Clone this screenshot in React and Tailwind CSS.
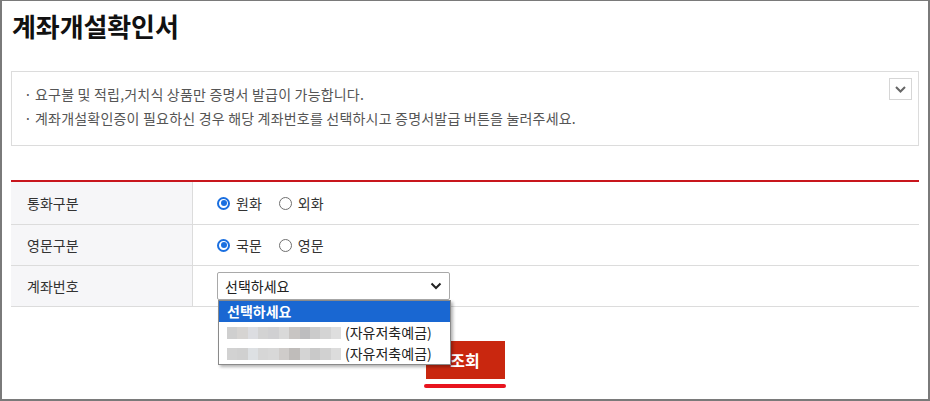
import React from "react";

const FONT = { fontFamily: '"Noto Sans CJK KR", "Noto Sans", sans-serif' };

function Radio({ checked, label }) {
  return (
    <span className="flex items-center">
      {checked ? (
        <span className="w-[13px] h-[13px] rounded-full border-2 border-[#1a6fe0] flex items-center justify-center">
          <span className="w-[6px] h-[6px] rounded-full bg-[#1a6fe0]" />
        </span>
      ) : (
        <span className="w-[13px] h-[13px] rounded-full border border-[#6f6f6f]" />
      )}
      <span className="ml-[6px] text-[14px] text-[#333]">{label}</span>
    </span>
  );
}

function Mosaic({ colors }) {
  return (
    <span className="flex h-[12px] w-[114px] overflow-hidden">
      {colors.map((c, i) => (
        <span key={i} className="h-full flex-1" style={{ background: c }} />
      ))}
    </span>
  );
}

const m1 = ["#cfcfcf", "#d6d4d2", "#dcdde1", "#d3d3d3", "#d0d0d2", "#d9d9d9", "#c8c5c3", "#bdbdbf", "#cbcbcb", "#d4d4d4", "#dedede"];
const m2 = ["#d2d2d2", "#d0d0d0", "#dde0e3", "#d6d6d6", "#d8d8d8", "#cfccca", "#bfbcba", "#d4d4d4", "#c9c9c9", "#d1d1d1", "#dcdcdc"];

export default function App() {
  return (
    <div
      className="w-[930px] h-[401px] bg-white border-l-2 border-t border-r-2 border-b-2 border-[#7a7a7a] overflow-hidden relative"
      style={FONT}
    >
      <div className="px-[9px]">
        <h1 className="pl-[1px] pt-[6px] h-[70px] text-[26px] leading-[38px] font-bold text-[#111] tracking-[-0.1px]">
          계좌개설확인서
        </h1>
        <div className="relative border border-[#dcdcdc] h-[75px] pt-[10px] pl-[12px] text-[14px] leading-[24px] text-[#555] tracking-[0.2px]">
          <p className="flex"><span className="w-[11px]">·</span>요구불 및 적립,거치식 상품만 증명서 발급이 가능합니다.</p>
          <p className="flex"><span className="w-[11px]">·</span>계좌개설확인증이 필요하신 경우 해당 계좌번호를 선택하시고 증명서발급 버튼을 눌러주세요.</p>
          <div className="absolute right-[6px] top-[6px] w-[23px] h-[22px] border border-[#d6d6d6] flex items-center justify-center">
            <svg width="11" height="7" viewBox="0 0 11 7">
              <path d="M1 1 L5.5 5.5 L10 1" fill="none" stroke="#666" strokeWidth="2" />
            </svg>
          </div>
        </div>

        <div className="mt-[34px] border-t-2 border-[#c8161d]">
          <div className="flex h-[43px] border-b border-[#dcdcdc]">
            <div className="w-[182px] bg-[#f6f6f8] border-r border-[#dcdcdc] pl-[16px] flex items-center text-[14px] text-[#333]">통화구분</div>
            <div className="flex items-center pl-[24px] gap-[17px]">
              <Radio checked label="원화" />
              <Radio label="외화" />
            </div>
          </div>
          <div className="flex h-[41px] border-b border-[#dcdcdc]">
            <div className="w-[182px] bg-[#f6f6f8] border-r border-[#dcdcdc] pl-[16px] flex items-center text-[14px] text-[#333]">영문구분</div>
            <div className="flex items-center pl-[24px] gap-[17px]">
              <Radio checked label="국문" />
              <Radio label="영문" />
            </div>
          </div>
          <div className="flex h-[41px] border-b border-[#dcdcdc]">
            <div className="w-[182px] bg-[#f6f6f8] border-r border-[#dcdcdc] pl-[16px] flex items-center text-[14px] text-[#333]">계좌번호</div>
            <div className="flex items-center pl-[24px] relative">
              <div className="w-[233px] h-[28px] border border-[#a9a9a9] rounded-[2px] flex items-center justify-between pl-[7px] pr-[7px] text-[14px] text-[#222]">
                <span>선택하세요</span>
                <svg width="12" height="8" viewBox="0 0 12 8">
                  <path d="M1.5 1.5 L6 6 L10.5 1.5" fill="none" stroke="#222" strokeWidth="2" />
                </svg>
              </div>
            </div>
          </div>
        </div>

        <div className="flex justify-center mt-[34px]">
          <div className="flex flex-col items-center">
            <button className="w-[79px] h-[38px] bg-[#c9270f] text-white text-[16px] font-bold">조회</button>
            <div className="mt-[5px] w-[82px] h-[4px] rounded-full bg-[#e8141e]" />
          </div>
        </div>
      </div>

      <div className="absolute left-[216px] top-[299px] w-[233px] bg-white border border-[#8a8a8a] shadow-[2px_2px_3px_rgba(0,0,0,0.3)] text-[14px] leading-[21px]">
        <div className="bg-[#1967d2] text-white font-bold pl-[8px]">선택하세요</div>
        <div className="flex items-center pl-[8px] text-[#222]">
          <Mosaic colors={m1} />
          <span className="ml-[4px]">(자유저축예금)</span>
        </div>
        <div className="flex items-center pl-[8px] text-[#222]">
          <Mosaic colors={m2} />
          <span className="ml-[4px]">(자유저축예금)</span>
        </div>
      </div>
    </div>
  );
}
